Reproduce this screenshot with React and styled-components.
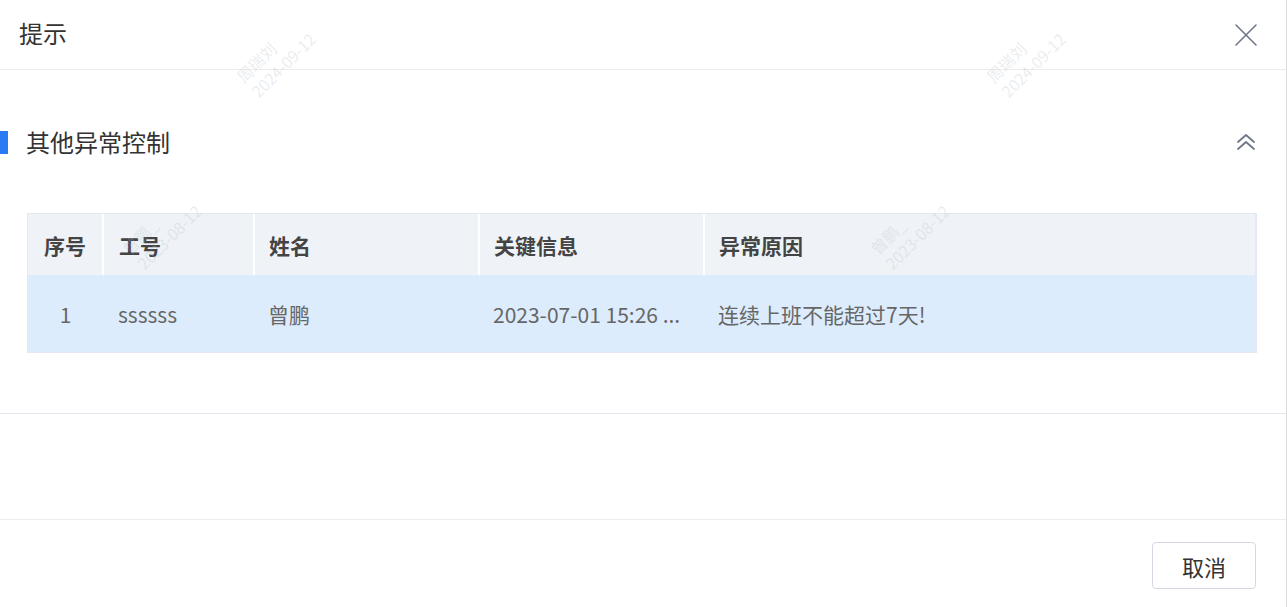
import React from 'react';
import styled, { createGlobalStyle } from 'styled-components';

const GlobalStyle = createGlobalStyle`
  html, body {
    margin: 0;
    padding: 0;
    background: #fff;
  }
  body {
    font-family: "Noto Sans CJK SC", "Noto Sans", sans-serif;
  }
`;

const Dialog = styled.div`
  position: relative;
  width: 1287px;
  height: 607px;
  box-sizing: border-box;
  border-right: 1px solid #dcdcdc;
  background: #fff;
  display: flex;
  flex-direction: column;
  overflow: hidden;
`;

const Header = styled.div`
  height: 69px;
  flex-shrink: 0;
  display: flex;
  align-items: center;
  justify-content: space-between;
  padding: 0 28px 0 19px;
  border-bottom: 1px solid #ececec;
`;

const Title = styled.div`
  font-size: 24px;
  color: #333;
  line-height: 1;
  margin-top: -4px;
`;

const IconButton = styled.button`
  border: none;
  background: none;
  padding: 0;
  display: flex;
  align-items: center;
  justify-content: center;
  cursor: pointer;
  color: #6f7889;
`;

const Body = styled.div`
  flex-shrink: 0;
  height: 343px;
  display: flex;
  flex-direction: column;
  border-bottom: 1px solid #e3e7f0;
`;

const SectionHead = styled.div`
  margin-top: 50px;
  height: 44px;
  display: flex;
  align-items: center;
  justify-content: space-between;
  padding-right: 30px;
`;

const SectionTitle = styled.div`
  display: flex;
  align-items: center;
  gap: 18px;
  font-size: 24px;
  line-height: 1;
  color: #333;

  &::before {
    content: '';
    display: block;
    width: 8px;
    height: 23px;
    background: #2a7af5;
  }
`;

const TableWrap = styled.div`
  margin: 49px 29px 0 27px;
  border: 1px solid #e4e8f0;
  border-right: 2px solid #e4e8f0;
`;

const Table = styled.table`
  width: 100%;
  border-collapse: collapse;
  table-layout: fixed;
  font-size: 21px;
`;

const Th = styled.th`
  height: 61px;
  background: #eff3f7;
  color: #444;
  font-weight: 700;
  text-align: left;
  padding: 0 0 0 ${(p) => p.pad || 15}px;
  border-left: 2px solid #fff;

  &:first-child {
    border-left: none;
  }
`;

const Td = styled.td`
  height: 77px;
  background: #ddecfc;
  color: #666;
  font-weight: 400;
  text-align: ${(p) => (p.center ? 'center' : 'left')};
  padding: 0 0 0 ${(p) => (p.center ? 0 : p.pad || 15)}px;
  white-space: nowrap;
  overflow: hidden;
  text-overflow: ellipsis;
`;

const Spacer = styled.div`
  height: 105px;
  flex-shrink: 0;
  border-bottom: 1px solid #ececec;
`;

const Footer = styled.div`
  flex: 1;
  display: flex;
  justify-content: flex-end;
  align-items: flex-start;
  padding: 22px 30px 0 0;
`;

const Button = styled.button`
  width: 104px;
  height: 47px;
  border: 1px solid #d3d8e2;
  border-radius: 4px;
  background: #fff;
  font-family: inherit;
  font-size: 22px;
  line-height: 1;
  color: #333;
  cursor: pointer;
`;

const Watermarks = styled.div`
  position: absolute;
  inset: 0;
  pointer-events: none;
`;

const Mark = styled.div`
  position: absolute;
  left: ${(p) => p.x}px;
  top: ${(p) => p.y}px;
  transform: rotate(-45deg);
  transform-origin: left top;
  color: rgba(180, 188, 200, 0.28);
  font-size: 16px;
  line-height: 21px;
  white-space: nowrap;
`;

const columns = [
  { key: 'idx', title: '序号', width: 75, pad: 16 },
  { key: 'no', title: '工号', width: 151, pad: 15 },
  { key: 'name', title: '姓名', width: 225, pad: 14 },
  { key: 'info', title: '关键信息', width: 225, pad: 14 },
  { key: 'reason', title: '异常原因', pad: 14 },
];

const rows = [
  {
    idx: '1',
    no: 'ssssss',
    name: '曾鹏',
    info: '2023-07-01 15:26 ...',
    reason: '连续上班不能超过7天!',
  },
];

const CloseIcon = () => (
  <svg width="24" height="24" viewBox="0 0 24 24" fill="none" stroke="currentColor" strokeWidth="1.6" strokeLinecap="round">
    <path d="M2 2 L22 22 M22 2 L2 22" />
  </svg>
);

const ChevronsUpIcon = () => (
  <svg width="20" height="18" viewBox="0 0 20 18" fill="none" stroke="currentColor" strokeWidth="1.8" strokeLinecap="round" strokeLinejoin="round">
    <path d="M2 9 L10 2 L18 9" />
    <path d="M2 16 L10 9 L18 16" />
  </svg>
);

export default function App() {
  return (
    <>
      <GlobalStyle />
      <Dialog>
        <Header>
          <Title>提示</Title>
          <IconButton aria-label="close">
            <CloseIcon />
          </IconButton>
        </Header>
        <Body>
          <SectionHead>
            <SectionTitle>其他异常控制</SectionTitle>
            <IconButton aria-label="collapse">
              <ChevronsUpIcon />
            </IconButton>
          </SectionHead>
          <TableWrap>
            <Table>
              <colgroup>
                {columns.map((c) => (
                  <col key={c.key} style={c.width ? { width: c.width } : undefined} />
                ))}
              </colgroup>
              <thead>
                <tr>
                  {columns.map((c) => (
                    <Th key={c.key} pad={c.pad}>{c.title}</Th>
                  ))}
                </tr>
              </thead>
              <tbody>
                {rows.map((r, i) => (
                  <tr key={i}>
                    {columns.map((c) => (
                      <Td key={c.key} pad={c.pad} center={c.key === 'idx'}>{r[c.key]}</Td>
                    ))}
                  </tr>
                ))}
              </tbody>
            </Table>
          </TableWrap>
        </Body>
        <Spacer />
        <Footer>
          <Button>取消</Button>
        </Footer>
        <Watermarks>
          <Mark x={232} y={72}>周瑞刘<br />2024-09-12</Mark>
          <Mark x={982} y={72}>周瑞刘<br />2024-09-12</Mark>
          <Mark x={118} y={244}>曾鹏_<br />2023-08-12</Mark>
          <Mark x={866} y={244}>曾鹏_<br />2023-08-12</Mark>
        </Watermarks>
      </Dialog>
    </>
  );
}
